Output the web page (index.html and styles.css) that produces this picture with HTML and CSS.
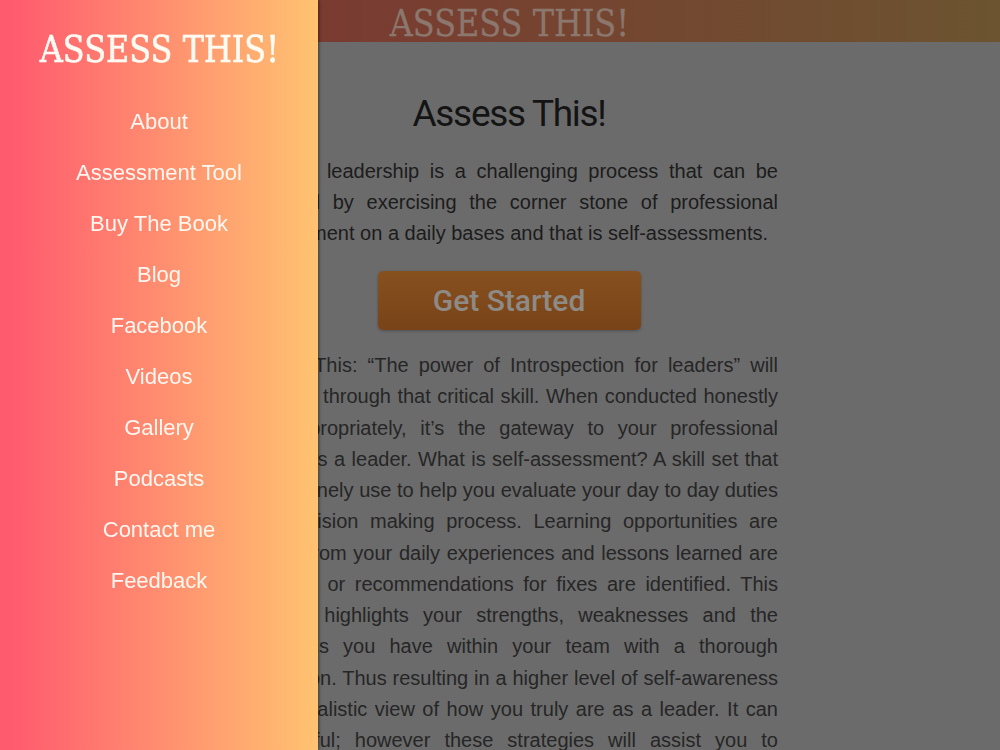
FILE: index.html
```html
<!DOCTYPE html>
<html>
<head>
   <title>Assess This!</title>
<link rel="stylesheet" href="styles.css"></head>
<body>
<header class="topbar"><span class="brand">ASSESS THIS!</span></header>
<main class="content">
<h1 class="title">Assess This!</h1>
<p class="intro">Effective leadership is a challenging process that can be achieved by exercising the corner stone of professional development on a daily bases and that is self-assessments.</p>
<div class="cta"><a class="start-btn" href="#">Get Started</a></div>
<p class="story">Assess This: “The power of Introspection for leaders” will<br>
take you through that critical skill. When conducted honestly<br>
and appropriately, it’s the gateway to your professional<br>
growth as a leader. What is self-assessment? A skill set that<br>
you routinely use to help you evaluate your day to day duties<br>
and decision making process. Learning opportunities are<br>
gained from your daily experiences and lessons learned are<br>
captured or recommendations for fixes are identified. This<br>
process highlights your strengths, weaknesses and the<br>
limitations you have within your team with a thorough<br>
evaluation. Thus resulting in a higher level of self-awareness<br>
and a realistic view of how you truly are as a leader. It can<br>
be painful; however these strategies will assist you to</p>
</main>

<nav class="drawer">
<div class="drawer-brand"><span class="brand">ASSESS THIS!</span></div>
<ul class="drawer-links">
<li><a href="#">About</a></li>
<li><a href="#">Assessment Tool</a></li>
<li><a href="#">Buy The Book</a></li>
<li><a href="#">Blog</a></li>
<li><a href="#">Facebook</a></li>
<li><a href="#">Videos</a></li>
<li><a href="#">Gallery</a></li>
<li><a href="#">Podcasts</a></li>
<li><a href="#">Contact me</a></li>
<li><a href="#">Feedback</a></li>
</ul>
</nav>
</body>
</html>
```

FILE: styles.css
```css
body{
   margin:0;
   background:#6b6b6b;
   font-family:"Liberation Sans", Arial, sans-serif;
   overflow:hidden;
}
/* slab wordmark, used in the bar and the drawer */
.brand{
   display:inline-block;
   font:400 38px/38px "DejaVu Serif", serif;
   -webkit-text-stroke:0.7px currentColor;
   transform:scaleX(.84);
}
/* page behind the open drawer (already dimmed) */
.topbar{
   height:42px;
   padding-left:18px;
   background:linear-gradient(to right, #8a3a34, #7a3b31 32%, #6c5430);
   text-align:center;
}
.topbar .brand{
   margin-top:6px;line-height:34px;
   color:#8b776d;-webkit-text-stroke:0.3px currentColor;
}
.content{width:538px;margin:0 auto;padding-left:18px;}
.title{
   margin:50px 0 0;
   font:400 37px/44px Roboto, sans-serif;
   letter-spacing:-1.3px;
   text-align:center;color:#141414;
}
.intro{
   margin:20px 0 0;
   font-size:20px;line-height:31px;
   text-align:justify;color:#1c1c1c;
}
.cta{margin-top:22px;display:flex;justify-content:center;}
.start-btn{
   width:263px;height:59px;
   border-radius:5px;
   background:linear-gradient(#87501f, #784318);
   box-shadow:0 1px 3px rgba(0,0,0,.25);
   color:#8e8a86;text-decoration:none;text-align:center;
   font:500 30px/59px Roboto, sans-serif;
}
.story{
   margin:20px 0 0;
   font-size:20px;line-height:31.25px;
   text-align:justify;text-align-last:justify;
   color:#262626;
}

/* side drawer */
.drawer{
   position:fixed;top:0;left:0;bottom:0;
   width:318px;
   background:linear-gradient(to right, #ff5b6e 4%, #ffc371);
   box-shadow:1px 0 3px rgba(0,0,0,.45);
}
.drawer-brand{padding-top:30px;text-align:center;color:#fffaf2;}
.drawer-links{list-style:none;margin:28px 0 0;padding:0;}
.drawer-links a{
   display:block;
   line-height:51px;font-size:22px;
   color:#fff7f0;text-decoration:none;text-align:center;
}
```
